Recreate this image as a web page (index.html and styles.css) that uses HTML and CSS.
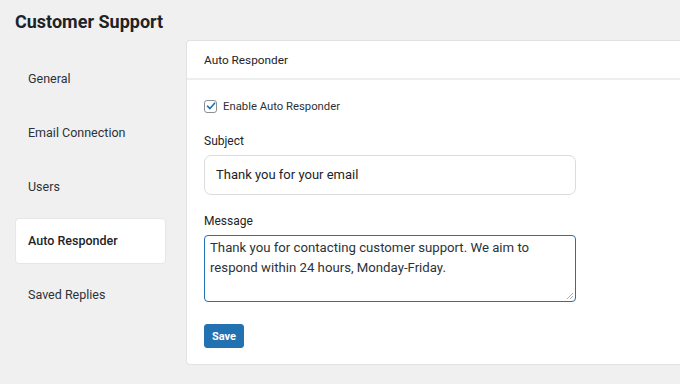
FILE: index.html
```html
<!DOCTYPE html>
<html>
<head>
<meta charset="utf-8">
<link rel="stylesheet" href="styles.css">
</head>
<body>
<h1 class="title">Customer Support</h1>
<div class="layout">
  <nav class="sidebar">
    <a class="nav-item">General</a>
    <a class="nav-item">Email Connection</a>
    <a class="nav-item">Users</a>
    <a class="nav-item active">Auto Responder</a>
    <a class="nav-item">Saved Replies</a>
  </nav>
  <section class="card">
    <div class="card-header">Auto Responder</div>
    <div class="card-body">
      <label class="check-row">
        <span class="checkbox"><svg width="10" height="10" viewBox="0 0 10 10"><path d="M1.5 5.2 L4 7.6 L8.6 2.2" fill="none" stroke="#2271b1" stroke-width="1.6" stroke-linecap="round" stroke-linejoin="round"/></svg></span>
        <span>Enable Auto Responder</span>
      </label>
      <div class="field-label">Subject</div>
      <div class="input">Thank you for your email</div>
      <div class="field-label msg">Message</div>
      <div class="textarea">Thank you for contacting customer support. We aim to respond within 24 hours, Monday-Friday.<svg class="grip" width="8" height="8" viewBox="0 0 8 8"><path d="M7 1 L1 7 M7 4 L4 7" stroke="#999" stroke-width="0.8"/></svg></div>
      <button class="btn">Save</button>
    </div>
  </section>
</div>
</body>
</html>
```
FILE: styles.css
```css
* { box-sizing: border-box; }
html, body { margin: 0; padding: 0; }
body {
  background: #f0f0f1;
  font-family: Roboto, "Liberation Sans", Arial, sans-serif;
  color: #1d2327;
  width: 680px;
  height: 384px;
  overflow: hidden;
}
.title {
  margin: 0;
  padding: 11px 0 0 15px;
  font-size: 18px;
  font-weight: bold;
  line-height: 22px;
  color: #1d2327;
}
.layout {
  display: flex;
  margin-top: 7px;
}
.sidebar {
  width: 186px;
  padding: 0 20px 0 15px;
  display: flex;
  flex-direction: column;
  padding-top: 16px;
}
.nav-item {
  display: block;
  height: 46px;
  line-height: 46px;
  padding-left: 13px;
  font-size: 12.5px;
  color: #2c3338;
  margin-bottom: 8px;
  border-radius: 4px;
}
.nav-item.active {
  background: #fff;
  font-weight: 500;
  color: #1d2327;
  border: 1px solid #e6e6e6;
  line-height: 44px;
  padding-left: 12px;
}
.card {
  flex: 1;
  background: #fff;
  border: 1px solid #e2e2e2;
  border-right: none;
  border-radius: 4px 0 0 4px;
  height: 325px;
}
.card-header {
  height: 39px;
  line-height: 38px;
  padding-left: 17px;
  font-size: 11.8px;
  color: #1d2327;
  border-bottom: 2px solid #eeeeee;
}
.card-body {
  padding: 19px 17px 0 17px;
}
.check-row {
  display: flex;
  align-items: center;
  gap: 6px;
  font-size: 11.3px;
  color: #2c3338;
  height: 14px;
}
.checkbox {
  width: 13px;
  height: 13px;
  border: 1px solid #8c8f94;
  border-radius: 3px;
  display: flex;
  align-items: center;
  justify-content: center;
}
.field-label {
  font-size: 12px;
  color: #1d2327;
  margin-top: 21px;
  line-height: 15px;
}
.field-label.msg { margin-top: 19px; }
.input {
  margin-top: 6px;
  width: 372px;
  height: 40px;
  border: 1px solid #dcdcde;
  border-radius: 7px;
  padding-left: 11px;
  font-size: 13px;
  line-height: 38px;
  color: #1d2327;
}
.textarea {
  position: relative;
  margin-top: 6px;
  width: 372px;
  height: 67px;
  border: 1.5px solid #2271b1;
  border-radius: 4px;
  padding: 2px 5px;
  font-size: 13.2px;
  line-height: 20px;
  color: #2c3338;
}
.grip { position: absolute; right: 1px; bottom: 1px; }
.btn {
  margin-top: 22px;
  background: #2271b1;
  color: #fff;
  border: 1px solid #2271b1;
  border-radius: 3px;
  height: 24px;
  width: 40px;
  padding: 0;
  font-family: Roboto, "Liberation Sans", Arial, sans-serif;
  font-weight: bold;
  font-size: 11px;
  display: block;
}
```
